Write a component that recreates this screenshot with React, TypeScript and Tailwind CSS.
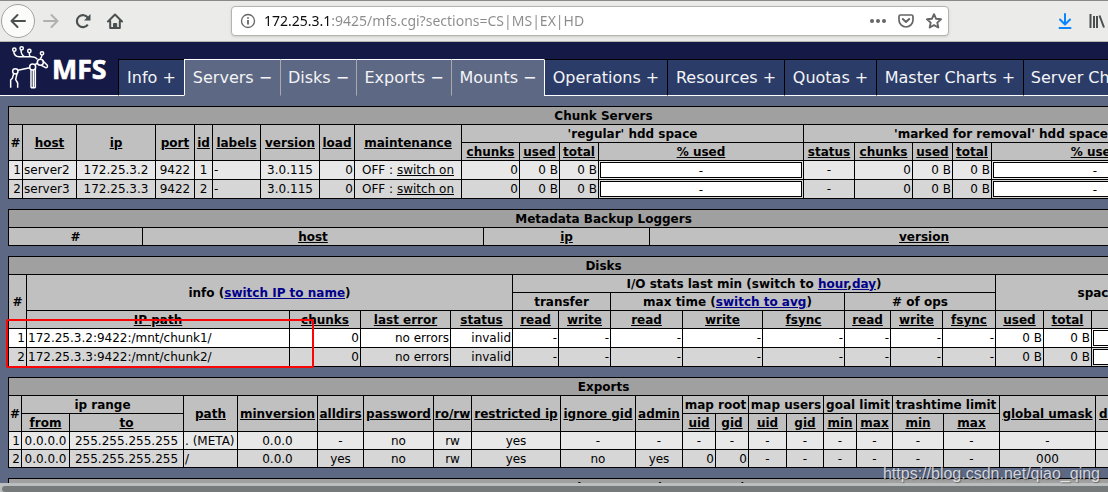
import type { ReactNode } from "react";

type Align = "left" | "center" | "right";

const alignClass: Record<Align, string> = {
  left: "text-left",
  center: "text-center",
  right: "text-right",
};

function Sort({ children }: { children: ReactNode }) {
  return (
    <a href="#sort" className="text-black underline">
      {children}
    </a>
  );
}

function Switch({ children }: { children: ReactNode }) {
  return (
    <a href="#switch" className="text-[#00008b] underline">
      {children}
    </a>
  );
}

function Title({ span, children }: { span: number; children: ReactNode }) {
  return (
    <tr className="h-[18px]">
      <th colSpan={span} className="border border-black bg-[#a0a0a0] p-0 font-bold">
        {children}
      </th>
    </tr>
  );
}

function H({
  cols = 1,
  rows = 1,
  plain = false,
  children,
}: {
  cols?: number;
  rows?: number;
  plain?: boolean;
  children: ReactNode;
}) {
  return (
    <th colSpan={cols} rowSpan={rows} className="border border-black bg-[#c0c0c0] p-0 font-bold">
      {plain ? children : <Sort>{children}</Sort>}
    </th>
  );
}

function D({ align = "center", children }: { align?: Align; children: ReactNode }) {
  return <td className={`border border-black px-px py-0 ${alignClass[align]}`}>{children}</td>;
}

function Meter() {
  return (
    <td className="border border-black p-px">
      <div className="h-4 border border-black bg-white text-center leading-4">-</div>
    </td>
  );
}

function Grid({ widths, className, children }: { widths: string[]; className: string; children: ReactNode }) {
  return (
    <table className={`table-fixed border-collapse ${className}`}>
      <colgroup>
        {widths.map((w, i) => (
          <col key={i} className={w} />
        ))}
      </colgroup>
      <tbody>{children}</tbody>
    </table>
  );
}

const tabs = [
  { label: "Info +", look: "w-[66px] border-t-black border-l-black border-b-white bg-[#2b3c69]" },
  { label: "Servers −", look: "w-[96px] border-t-white border-l-white border-b-[#5c6884] bg-[#5c6884]" },
  { label: "Disks −", look: "w-[76px] border-t-white border-l-[#a9a9a9] border-b-[#5c6884] bg-[#5c6884]" },
  { label: "Exports −", look: "w-[95px] border-t-white border-l-[#a9a9a9] border-b-[#5c6884] bg-[#5c6884]" },
  { label: "Mounts −", look: "w-[93px] border-t-white border-l-[#a9a9a9] border-b-[#5c6884] bg-[#5c6884]" },
  { label: "Operations +", look: "w-[123px] border-t-black border-l-white border-b-white bg-[#2b3c69]" },
  { label: "Resources +", look: "w-[117px] border-t-black border-l-black border-b-white bg-[#2b3c69]" },
  { label: "Quotas +", look: "w-[92px] border-t-black border-l-black border-b-white bg-[#2b3c69]" },
  { label: "Master Charts +", look: "w-[147px] border-t-black border-l-black border-b-white bg-[#2b3c69]" },
  { label: "Server Charts +", look: "w-[143px] border-t-black border-l-black border-b-white bg-[#2b3c69]" },
];

function Toolbar() {
  return (
    <div className="flex h-[42px] shrink-0 items-center border-t border-b border-t-[#8b8888] border-b-[#b3b3b0] bg-[#ebebea] pr-[3px] pl-px text-[#4a4f50]">
      <button aria-label="Back" className="flex size-[34px] items-center justify-center rounded-full border border-[#a2a29f] bg-[#fbfbfa]">
        <svg width="16" height="16" viewBox="0 0 16 16" fill="none" stroke="currentColor" strokeWidth="2" strokeLinecap="round" strokeLinejoin="round">
          <path d="M15 8H1.5M7.5 2l-6 6 6 6" />
        </svg>
      </button>
      <button aria-label="Forward" disabled className="ml-2 text-[#b1b2b0]">
        <svg className="block" width="16" height="16" viewBox="0 0 16 16" fill="none" stroke="currentColor" strokeWidth="2" strokeLinecap="round" strokeLinejoin="round">
          <path d="M1 8h13.500M8.500 2l6 6-6 6" />
        </svg>
      </button>
      <button aria-label="Reload" className="ml-4">
        <svg className="block" width="16" height="16" viewBox="0 0 16 16" fill="none" stroke="currentColor" strokeWidth="2.2">
          <path d="M12.800 11.600A6 6 0 1 1 13 5" />
          <path d="M15.500 1v6.500H9z" fill="currentColor" stroke="none" />
        </svg>
      </button>
      <button aria-label="Home" className="ml-4">
        <svg className="block" width="16" height="16" viewBox="0 0 16 16" fill="none" stroke="currentColor" strokeWidth="2" strokeLinecap="round" strokeLinejoin="round">
          <path d="M1 8.500L8 1.500l7 7M3.200 8v7h9.600V8" />
          <path d="M6.500 15v-4.500h3.200V15z" fill="currentColor" strokeWidth="1" />
        </svg>
      </button>
      <div className="mr-[108px] ml-[108px] flex h-[30px] flex-1 items-center rounded border border-[#b5b5b0] bg-white pr-1.5 pl-2 text-[#656565] shadow-sm">
        <svg width="16" height="16" viewBox="0 0 16 16" fill="none" stroke="currentColor" strokeWidth="1.3">
          <circle cx="8" cy="8" r="6.500" />
          <path d="M8 7v4.500M8 4.200v1.600" strokeWidth="1.800" />
        </svg>
        <input
          aria-label="Address"
          readOnly
          value="172.25.3.1:9425/mfs.cgi?sections=CS|MS|EX|HD"
          className="ml-2 min-w-0 flex-1 bg-[linear-gradient(to_right,#0c0c0c_67px,#8b8b8b_67px)] bg-clip-text font-['Noto_Sans',sans-serif] text-sm text-transparent outline-none"
        />
        <button aria-label="Page actions">
          <svg className="block" width="16" height="16" viewBox="0 0 16 16" fill="currentColor">
            <circle cx="2" cy="8" r="2" />
            <circle cx="8" cy="8" r="2" />
            <circle cx="14" cy="8" r="2" />
          </svg>
        </button>
        <button aria-label="Save to Pocket" className="ml-3">
          <svg className="block" width="16" height="16" viewBox="0 0 16 16" fill="none" stroke="currentColor" strokeWidth="2" strokeLinecap="round" strokeLinejoin="round">
            <path d="M2.500 2h11a1.500 1.500 0 0 1 1.500 1.500V7A7 7 0 0 1 1 7V3.500A1.500 1.500 0 0 1 2.500 2z" strokeWidth="1.700" />
            <path d="M4.800 6L8 9l3.200-3" />
          </svg>
        </button>
        <button aria-label="Bookmark" className="ml-3">
          <svg className="block" width="16" height="16" viewBox="0 0 16 16" fill="none" stroke="currentColor" strokeWidth="1.900" strokeLinejoin="round">
            <path d="M8 1.200l2 4.500 5 .6-3.700 3.300 1 4.900L8 12.100l-4.300 2.400 1-4.900L1 6.300l5-.6z" />
          </svg>
        </button>
      </div>
      <button aria-label="Downloads" className="text-[#0a84ff]">
        <svg className="block" width="16" height="16" viewBox="0 0 16 16" fill="none" stroke="currentColor" strokeWidth="2" strokeLinecap="round" strokeLinejoin="round">
          <path d="M8 1v10M3 6.500l5 5 5-5M2.500 15h11" />
        </svg>
      </button>
      <button aria-label="Library" className="ml-4">
        <svg className="block" width="16" height="16" viewBox="0 0 16 16" fill="none" stroke="currentColor" strokeWidth="2">
          <path d="M1.500 1v14M5 3v12M8 3v12M10.500 2.500l4.500 12" />
        </svg>
      </button>
    </div>
  );
}

function Logo() {
  return (
    <a href="#home" aria-label="MFS" className="flex w-[118px] shrink-0 border-b border-white pt-0.5 pl-2">
      <svg width="100" height="45" viewBox="24 132 300 135" fill="none" stroke="#fff" strokeWidth="4.500" strokeLinejoin="round">
        <circle cx="43" cy="149" r="5" />
        <circle cx="65" cy="145" r="5" />
        <circle cx="88" cy="153" r="5" />
        <circle cx="126" cy="160" r="5" />
        <path d="M41 154q2 16 16 16h36q14 0 19 8M63 150q0 14 10 20M88 158q-1 9 3 12M126 165q-1 9-6 11" />
        <circle cx="121" cy="187" r="9" />
        <circle cx="98" cy="201" r="9" />
        <circle cx="46" cy="214" r="8" />
        <path d="M129 183l13 13q2 7-5 7l-13-7M54 211l35-8M105 194l8-5" />
        <path d="M93 209v54M100 210v53M106 206v57M93 263h13" />
        <path d="M41 221l-4 14-5 5v23M51 221l-4 18 6 10v14" />
        <text x="156" y="237" fill="#fff" stroke="#fff" strokeWidth="2" fontFamily="'Open Sans', 'Noto Sans', sans-serif" fontWeight="700" fontSize="80">
          MFS
        </text>
      </svg>
    </a>
  );
}

function ChunkServers() {
  const rows = [
    { n: 1, host: "server2", ip: "172.25.3.2", bg: "bg-[#e8e8e8]" },
    { n: 2, host: "server3", ip: "172.25.3.3", bg: "bg-[#d6d6d6]" },
  ];
  return (
    <Grid
      className="w-[1191px]"
      widths={["w-[14px]", "w-[54px]", "w-[79px]", "w-[39px]", "w-[18px]", "w-[48px]", "w-[59px]", "w-[35px]", "w-[107px]", "w-[58px]", "w-[40px]", "w-[39px]", "w-[205px]", "w-[51px]", "w-[58px]", "w-[40px]", "w-[39px]", "w-[207px]"]}
    >
      <Title span={18}>Chunk Servers</Title>
      <tr className="h-[18px]">
        <H rows={2} plain>#</H>
        {["host", "ip", "port", "id", "labels", "version", "load", "maintenance"].map((h) => (
          <H key={h} rows={2}>{h}</H>
        ))}
        <H cols={4} plain>'regular' hdd space</H>
        <H cols={5} plain>'marked for removal' hdd space</H>
      </tr>
      <tr className="h-[18px]">
        {["chunks", "used", "total", "% used", "status", "chunks", "used", "total", "% used"].map((h, i) => (
          <H key={i}>{h}</H>
        ))}
      </tr>
      {rows.map((r) => (
        <tr key={r.n} className={`h-[19px] leading-4 ${r.bg}`}>
          <D align="right">{r.n}</D>
          <D align="left">{r.host}</D>
          <D>{r.ip}</D>
          <D>9422</D>
          <D>{r.n}</D>
          <D align="left">-</D>
          <D>3.0.115</D>
          <D align="right">0</D>
          <D>OFF : <Sort>switch on</Sort></D>
          <D align="right">0</D>
          <D align="right">0 B</D>
          <D align="right">0 B</D>
          <Meter />
          <D>-</D>
          <D align="right">0</D>
          <D align="right">0 B</D>
          <D align="right">0 B</D>
          <Meter />
        </tr>
      ))}
    </Grid>
  );
}

function BackupLoggers() {
  return (
    <Grid className="w-[1191px]" widths={["w-[134px]", "w-[341px]", "w-[166px]", "w-[549px]"]}>
      <Title span={4}>Metadata Backup Loggers</Title>
      <tr className="h-[18px]">
        <H plain>#</H>
        <H>host</H>
        <H>ip</H>
        <H>version</H>
      </tr>
    </Grid>
  );
}

function Disks() {
  const rows = [
    { n: 1, path: "172.25.3.2:9422:/mnt/chunk1/", bg: "bg-white" },
    { n: 2, path: "172.25.3.3:9422:/mnt/chunk2/", bg: "bg-[#d6d6d6]" },
  ];
  return (
    <div className="relative">
      <Grid
        className="w-[1191px]"
        widths={["w-[18px]", "w-[263px]", "w-[71px]", "w-[90px]", "w-[62px]", "w-[46px]", "w-[52px]", "w-[72px]", "w-[80px]", "w-[82px]", "w-[46px]", "w-[52px]", "w-[53px]", "w-[48px]", "w-[48px]", "w-[107px]"]}
      >
        <Title span={16}>Disks</Title>
        <tr className="h-[18px]">
          <H rows={3} plain>#</H>
          <H cols={4} rows={2} plain>info (<Switch>switch IP to name</Switch>)</H>
          <H cols={8} plain>I/O stats last min (switch to <Switch>hour</Switch>,<Switch>day</Switch>)</H>
          <H cols={3} rows={2} plain>space</H>
        </tr>
        <tr className="h-[18px]">
          <H cols={2} plain>transfer</H>
          <H cols={3} plain>max time (<Switch>switch to avg</Switch>)</H>
          <H cols={3} plain># of ops</H>
        </tr>
        <tr className="h-[18px]">
          {["IP path", "chunks", "last error", "status", "read", "write", "read", "write", "fsync", "read", "write", "fsync", "used", "total", "% used"].map((h, i) => (
            <H key={i}>{h}</H>
          ))}
        </tr>
        {rows.map((r) => (
          <tr key={r.n} className={`h-[19px] leading-4 ${r.bg}`}>
            <D align="right">{r.n}</D>
            <D align="left">{r.path}</D>
            {["0", "no errors", "invalid", "-", "-", "-", "-", "-", "-", "-", "-", "0 B", "0 B"].map((v, i) => (
              <D key={i} align="right">{v}</D>
            ))}
            <Meter />
          </tr>
        ))}
      </Grid>
      <div className="pointer-events-none absolute top-[63px] -left-0.5 h-[49px] w-[308px] rounded-xs border-2 border-[#fb0606]" />
    </div>
  );
}

function Exports() {
  return (
    <Grid
      className="w-[1191px]"
      widths={["w-[13px]", "w-[48px]", "w-[114px]", "w-[54px]", "w-[80px]", "w-[46px]", "w-[70px]", "w-[38px]", "w-[89px]", "w-[75px]", "w-[47px]", "w-[33px]", "w-[33px]", "w-[38px]", "w-[37px]", "w-[33px]", "w-[36px]", "w-[51px]", "w-[56px]", "w-[96px]", "w-[103px]"]}
    >
      <Title span={21}>Exports</Title>
      <tr className="h-[18px]">
        <H rows={2} plain>#</H>
        <H cols={2} plain>ip range</H>
        {["path", "minversion", "alldirs", "password", "ro/rw", "restricted ip", "ignore gid", "admin"].map((h) => (
          <H key={h} rows={2}>{h}</H>
        ))}
        {["map root", "map users", "goal limit", "trashtime limit"].map((h) => (
          <H key={h} cols={2} plain>{h}</H>
        ))}
        <H rows={2}>global umask</H>
        <H rows={2}>disables mask</H>
      </tr>
      <tr className="h-[18px]">
        {["from", "to", "uid", "gid", "uid", "gid", "min", "max", "min", "max"].map((h, i) => (
          <H key={i}>{h}</H>
        ))}
      </tr>
      <tr className="h-[18px] bg-[#e8e8e8]">
        <D align="right">1</D>
        <D>0.0.0.0</D>
        <D>255.255.255.255</D>
        <D align="left">. (META)</D>
        {["0.0.0", "-", "no", "rw", "yes", "-", "-", "-", "-", "-", "-", "-", "-", "-", "-", "-", "-"].map((v, i) => (
          <D key={i}>{v}</D>
        ))}
      </tr>
      <tr className="h-[18px] bg-[#d6d6d6]">
        <D align="right">2</D>
        <D>0.0.0.0</D>
        <D>255.255.255.255</D>
        <D align="left">/</D>
        {["0.0.0", "yes", "no", "rw", "yes", "no", "yes"].map((v, i) => (
          <D key={i}>{v}</D>
        ))}
        <D align="right">0</D>
        <D align="right">0</D>
        {["-", "-", "-", "-", "-", "-", "000", "-"].map((v, i) => (
          <D key={i}>{v}</D>
        ))}
      </tr>
    </Grid>
  );
}

export default function App() {
  return (
    <div className="relative flex h-screen flex-col overflow-hidden bg-[#5c6884] font-['DejaVu_Sans',sans-serif]">
      <Toolbar />
      <div className="min-h-0 flex-1 overflow-auto [scrollbar-width:none]">
        <header className="flex h-[54px] w-max min-w-full bg-[#151945]">
          <Logo />
          <nav className="flex grow items-end">
            {tabs.map((t) => (
              <a
                key={t.label}
                href="#section"
                className={`flex h-[37px] shrink-0 items-center justify-center border-t border-b border-l text-base whitespace-nowrap text-[#f4f4f6] ${t.look}`}
              >
                {t.label}
              </a>
            ))}
          </nav>
        </header>
        <main className="flex w-max flex-col gap-2.5 px-2 py-2.5 text-xs leading-[14px] whitespace-nowrap text-black">
          <ChunkServers />
          <BackupLoggers />
          <Disks />
          <Exports />
          <Grid className="w-[1285px]" widths={["w-[1284px]"]}>
            <Title span={1}>Active mounts (parameters)</Title>
          </Grid>
        </main>
      </div>
      <div className="h-[9px] shrink-0 bg-[#bbbebe] pt-[3px] pl-0.5">
        <div className="h-1.5 rounded-l-full bg-[#777a7b]" />
      </div>
      <div className="pointer-events-none absolute right-2 bottom-1.5 font-['Liberation_Sans',sans-serif] text-base text-white/75 [text-shadow:1px_1px_1px_rgb(0_0_0/0.35)]">
        https://blog.csdn.net/qiao_qing
      </div>
    </div>
  );
}
